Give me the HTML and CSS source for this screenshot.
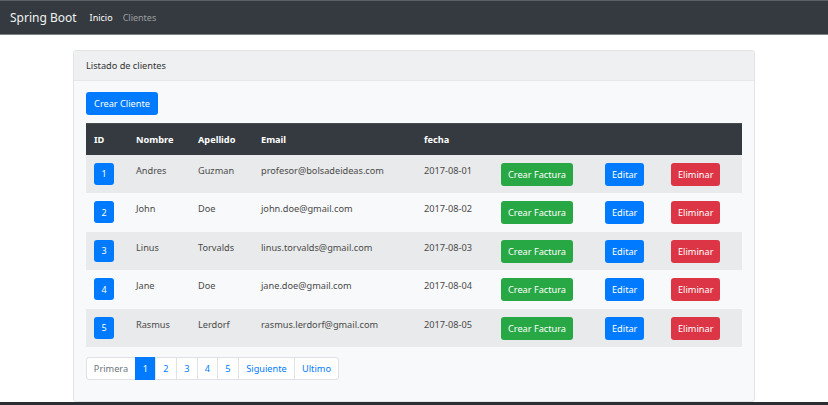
FILE: index.html
```html
<!DOCTYPE html>
<html lang="es">
<head>
<meta charset="utf-8">
<title>Spring Boot</title>
<link rel="stylesheet" href="styles.css">
</head>
<body>
<nav class="navbar">
  <a class="brand" href="#">Spring Boot</a>
  <a class="nav-link active" href="#">Inicio</a>
  <a class="nav-link" href="#">Clientes</a>
</nav>
<main class="page">
  <section class="card">
    <div class="card-header">Listado de clientes</div>
    <div class="card-body">
      <a class="btn btn-primary btn-create" href="#">Crear Cliente</a>
      <table class="table">
        <colgroup>
          <col class="c-id"><col class="c-nombre"><col class="c-apellido"><col class="c-email"><col class="c-fecha"><col class="c-factura"><col class="c-editar"><col class="c-eliminar">
        </colgroup>
        <thead>
          <tr><th>ID</th><th>Nombre</th><th>Apellido</th><th>Email</th><th>fecha</th><th></th><th></th><th></th></tr>
        </thead>
        <tbody>
          <tr><td><a class="btn btn-primary btn-id" href="#">1</a></td><td>Andres</td><td>Guzman</td><td>profesor@bolsadeideas.com</td><td>2017-08-01</td><td><a class="btn btn-success" href="#">Crear Factura</a></td><td><a class="btn btn-primary" href="#">Editar</a></td><td><a class="btn btn-danger" href="#">Eliminar</a></td></tr>
          <tr><td><a class="btn btn-primary btn-id" href="#">2</a></td><td>John</td><td>Doe</td><td>john.doe@gmail.com</td><td>2017-08-02</td><td><a class="btn btn-success" href="#">Crear Factura</a></td><td><a class="btn btn-primary" href="#">Editar</a></td><td><a class="btn btn-danger" href="#">Eliminar</a></td></tr>
          <tr><td><a class="btn btn-primary btn-id" href="#">3</a></td><td>Linus</td><td>Torvalds</td><td>linus.torvalds@gmail.com</td><td>2017-08-03</td><td><a class="btn btn-success" href="#">Crear Factura</a></td><td><a class="btn btn-primary" href="#">Editar</a></td><td><a class="btn btn-danger" href="#">Eliminar</a></td></tr>
          <tr><td><a class="btn btn-primary btn-id" href="#">4</a></td><td>Jane</td><td>Doe</td><td>jane.doe@gmail.com</td><td>2017-08-04</td><td><a class="btn btn-success" href="#">Crear Factura</a></td><td><a class="btn btn-primary" href="#">Editar</a></td><td><a class="btn btn-danger" href="#">Eliminar</a></td></tr>
          <tr><td><a class="btn btn-primary btn-id" href="#">5</a></td><td>Rasmus</td><td>Lerdorf</td><td>rasmus.lerdorf@gmail.com</td><td>2017-08-05</td><td><a class="btn btn-success" href="#">Crear Factura</a></td><td><a class="btn btn-primary" href="#">Editar</a></td><td><a class="btn btn-danger" href="#">Eliminar</a></td></tr>
        </tbody>
      </table>
      <ul class="pagination">
        <li class="page-item"><span class="page-link muted p-primera">Primera</span></li>
        <li class="page-item active"><span class="page-link p-1">1</span></li>
        <li class="page-item"><a class="page-link p-2" href="#">2</a></li>
        <li class="page-item"><a class="page-link p-3" href="#">3</a></li>
        <li class="page-item"><a class="page-link p-4" href="#">4</a></li>
        <li class="page-item"><a class="page-link p-5" href="#">5</a></li>
        <li class="page-item"><a class="page-link p-sig" href="#">Siguiente</a></li>
        <li class="page-item"><a class="page-link p-ult" href="#">Ultimo</a></li>
      </ul>
    </div>
  </section>
</main>
<div class="bottom-edge"></div>
</body>
</html>
```
FILE: styles.css
```css
* { box-sizing: border-box; }
html, body { margin: 0; padding: 0; }
body {
  background: #ffffff;
  font-family: "Noto Sans", "Open Sans", sans-serif;
  font-size: 10px;
  color: #212529;
  height: 405px;
  overflow: hidden;
  display: flex;
  flex-direction: column;
}
a { text-decoration: none; }

.navbar {
  height: 35px;
  background: #343a40;
  border-top: 1px solid #5c6167;
  border-bottom: 1px solid #7d8186;
  display: flex;
  align-items: center;
  padding: 0 10px;
  flex-shrink: 0;
}
.brand {
  color: #f2f2f2;
  font-size: 12px;
  margin-right: 13px;
}
.nav-link {
  color: rgba(255,255,255,.5);
  font-size: 9px;
  margin-right: 10px;
}
.nav-link.active { color: #ffffff; }

.page {
  flex: 1;
  padding: 15px 0 0 73px;
  min-height: 0;
}
.card {
  width: 682px;
  height: 352px;
  border: 1px solid #e1e3e5;
  border-radius: 3px;
  background: #f8f9fa;
  overflow: hidden;
}
.card-header {
  height: 30px;
  background: #eff0f1;
  border-bottom: 1px solid #e4e6e8;
  padding: 0 12px;
  display: flex;
  align-items: center;
  font-size: 9.2px;
  color: #333;
}
.card-body { padding: 11px 12px 12px 12px; }

.btn {
  display: inline-flex;
  align-items: center;
  justify-content: center;
  height: 23px;
  padding: 0 7px;
  border-radius: 3px;
  color: #fff;
  font-size: 9.2px;
  white-space: nowrap;
}
.btn-primary { background: #007bff; }
.btn-success { background: #28a745; }
.btn-danger { background: #dc3545; }
.btn-create { width: 72px; margin-bottom: 8px; }
.btn-id { width: 20px; height: 22px; padding: 0; font-size: 9px; }

.table {
  width: 656px;
  border-collapse: collapse;
  table-layout: fixed;
}
.c-id { width: 42px; }
.c-nombre { width: 62px; }
.c-apellido { width: 63px; }
.c-email { width: 163px; }
.c-fecha { width: 77px; }
.c-factura { width: 104px; }
.c-editar { width: 66px; }
.c-eliminar { width: 79px; }
.table th {
  background: #343a40;
  color: #fff;
  font-weight: 700;
  text-align: left;
  height: 31px;
  padding: 0 8px;
  font-size: 9.2px;
  border-top: 1px solid #454d55;
}
.table td {
  height: 38.6px;
  padding: 9px 8px 0 8px;
  vertical-align: top;
  color: #4a4a4a;
  font-size: 9.2px;
  white-space: nowrap;
}
.table td:first-child, .table td:nth-child(6), .table td:nth-child(7), .table td:nth-child(8) { padding-top: 8px; }
.table tbody tr:nth-child(odd) { background: #e9eaeb; }

.pagination {
  list-style: none;
  display: flex;
  margin: 10px 0 0 0;
  padding: 0;
}
.page-link {
  display: flex;
  align-items: center;
  justify-content: center;
  height: 23px;
  border: 1px solid #dee2e6;
  margin-left: -1px;
  background: #fff;
  color: #007bff;
  font-size: 9.2px;
}
.page-item:first-child .page-link { margin-left: 0; border-radius: 3px 0 0 3px; }
.page-item:last-child .page-link { border-radius: 0 3px 3px 0; }
.page-link.muted { color: #6c757d; }
.page-item.active .page-link { background: #007bff; border-color: #007bff; color: #fff; }
.p-primera { width: 50px; }
.p-1 { width: 21px; }
.p-2, .p-3, .p-5 { width: 22px; }
.p-4 { width: 21px; }
.p-sig { width: 57px; }
.p-ult { width: 45px; }

.bottom-edge {
  height: 3px;
  background: #2b2e33;
  flex-shrink: 0;
}
```
